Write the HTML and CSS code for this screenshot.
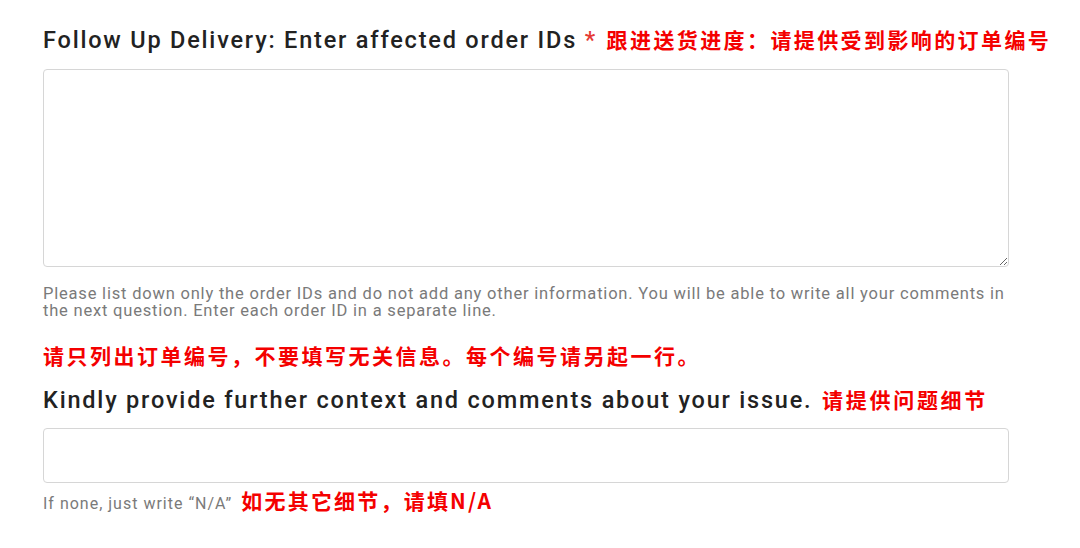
FILE: index.html
```html
<!DOCTYPE html>
<html lang="en">
<head>
<meta charset="utf-8">
<link rel="stylesheet" href="styles.css">
</head>
<body>
<form class="form">
  <div class="field">
    <label class="label">Follow Up Delivery: Enter affected order IDs <span class="req">*</span> <span class="cn cn-head">跟进送货进度：请提供受到影响的订单编号</span></label>
    <textarea class="area"></textarea>
    <p class="help">Please list down only the order IDs and do not add any other information. You will be able to write all your comments in the next question. Enter each order ID in a separate line.</p>
    <p class="cn cn-note">请只列出订单编号，不要填写无关信息。每个编号请另起一行。</p>
  </div>
  <div class="field field2">
    <label class="label label2">Kindly provide further context and comments about your issue. <span class="cn cn-head2">请提供问题细节</span></label>
    <input class="input" type="text">
    <p class="help help2">If none, just write “N/A” <span class="cn cn-small">如无其它细节，请填N/A</span></p>
  </div>
</form>
</body>
</html>
```

FILE: styles.css
```css
html, body {
  margin: 0;
  padding: 0;
  background: #ffffff;
}
.form {
  width: 966px;
  padding: 21px 0 0 43px;
  font-family: Roboto, "Noto Sans", sans-serif;
}
.field {
  display: flex;
  flex-direction: column;
}
.label {
  font-size: 23.5px;
  font-weight: 500;
  letter-spacing: 1.8px;
  color: #222;
  line-height: 36px;
  display: block;
  white-space: nowrap;
  margin-bottom: 11px;
}
.req {
  color: #e53935;
}
.cn {
  font-family: "Noto Sans CJK SC", sans-serif;
  color: #f40000;
  font-weight: 700;
}
.cn-head {
  font-size: 21px;
  letter-spacing: 2.4px;
  margin-left: 2px;
}
.area {
  display: block;
  box-sizing: border-box;
  width: 966px;
  height: 198px;
  border: 1.5px solid #d6d6d6;
  border-radius: 4px;
  resize: vertical;
  margin: 0;
  font-family: Roboto, sans-serif;
}
.help {
  margin: 18px 0 0 0;
  font-size: 16.5px;
  line-height: 17px;
  color: #7a7a7a;
  letter-spacing: 0.8px;
}
.cn-note {
  margin: 21px 0 0 0;
  font-size: 21px;
  letter-spacing: 2.5px;
  line-height: 30px;
}
.field2 {
  margin-top: 11px;
}
.label2 {
  margin-bottom: 10px;
}
.cn-head2 {
  font-size: 21px;
  letter-spacing: 2.7px;
  margin-left: 2px;
}
.input {
  display: block;
  box-sizing: border-box;
  width: 966px;
  height: 55px;
  border: 1.5px solid #d6d6d6;
  border-radius: 4px;
  margin: 0;
}
.help2 {
  margin-top: 5px;
  font-size: 16px;
  line-height: 24px;
  letter-spacing: 1px;
  white-space: nowrap;
}
.cn-small {
  font-size: 21px;
  letter-spacing: 2.2px;
  margin-left: 4px;
}
```
